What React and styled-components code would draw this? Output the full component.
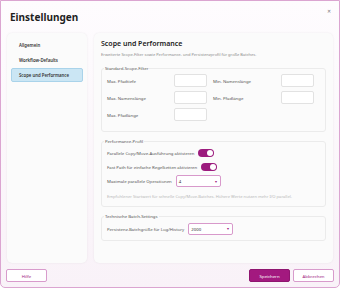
import React from 'react'
import styled, { createGlobalStyle } from 'styled-components'

const GlobalStyle = createGlobalStyle`
  html, body {
    margin: 0;
    padding: 0;
    background: #ffffff;
  }
  body {
    font-family: 'Noto Sans', 'Liberation Sans', sans-serif;
    color: #333;
  }
  * {
    box-sizing: border-box;
  }
`

const scopeFields = [
  ['Max. Pfadtiefe', 'Min. Namenslänge'],
  ['Max. Namenslänge', 'Min. Pfadlänge'],
  ['Max. Pfadlänge', null],
]

const App = () => {
  return (
    <>
      <GlobalStyle />
      <Window>
        <Header>
          <Title>Einstellungen</Title>
          <Close>✕</Close>
        </Header>
        <Main>
          <Sidebar>
            <NavItem>Allgemein</NavItem>
            <NavItem>Workflow-Defaults</NavItem>
            <NavItem $active>Scope und Performance</NavItem>
          </Sidebar>
          <Content>
            <PanelTitle>Scope und Performance</PanelTitle>
            <Subtitle>
              Erweiterte Scope-Filter sowie Performance- und Persistenzprofil für große Batches.
            </Subtitle>

            <Group $top="7px" $padTop="3px">
              <Legend>Standard-Scope-Filter</Legend>
              <FieldGrid>
                {scopeFields.map(([left, right]) => (
                  <React.Fragment key={left}>
                    <FieldLabel>{left}</FieldLabel>
                    <NumberInput />
                    {right ? <FieldLabel>{right}</FieldLabel> : <span />}
                    {right ? <NumberInput /> : <span />}
                  </React.Fragment>
                ))}
              </FieldGrid>
            </Group>

            <Group $top="6px" $padTop="2px">
              <Legend>Performance-Profil</Legend>
              <Row>
                <FieldLabel>Parallele Copy/Move-Ausführung aktivieren</FieldLabel>
                <Toggle />
              </Row>
              <Row>
                <FieldLabel>Fast Path für einfache Regelketten aktivieren</FieldLabel>
                <Toggle />
              </Row>
              <Row $select>
                <FieldLabel>Maximale parallele Operationen</FieldLabel>
                <Select>
                  <span>4</span>
                  <Caret>▾</Caret>
                </Select>
              </Row>
              <Hint>
                Empfohlener Startwert für schnelle Copy/Move-Batches. Höhere Werte nutzen mehr I/O parallel.
              </Hint>
            </Group>

            <Group $top="6px" $padTop="1.5px" $padBottom="5px">
              <Legend>Technische Batch-Settings</Legend>
              <Row $select>
                <FieldLabel>Persistenz-Batchgröße für Log/History</FieldLabel>
                <Select>
                  <span>2000</span>
                  <Caret>▾</Caret>
                </Select>
              </Row>
            </Group>
          </Content>
        </Main>
        <Footer>
          <Button>Hilfe</Button>
          <Actions>
            <Button $primary>Speichern</Button>
            <Button>Abbrechen</Button>
          </Actions>
        </Footer>
      </Window>
    </>
  )
}

export default App

const Window = styled.div`
  width: 340px;
  height: 288px;
  border: 1px solid #dba5d1;
  border-radius: 0 0 5px 5px;
  background: linear-gradient(180deg, #fefcfe 0%, #f9f2f8 100%);
  display: flex;
  flex-direction: column;
`

const Header = styled.div`
  height: 32px;
  display: flex;
  justify-content: space-between;
  align-items: flex-start;
  padding: 10px 8px 0 9px;
`

const Title = styled.h1`
  margin: 0;
  font-size: 10px;
  line-height: 12px;
  font-weight: 700;
  color: #1f1f1f;
`

const Close = styled.span`
  font-size: 4.5px;
  line-height: 6px;
  color: #777;
  margin-top: -3px;
`

const Main = styled.div`
  height: 230px;
  display: flex;
  gap: 7px;
  padding: 0 6px;
`

const Panel = styled.div`
  background: #fbfbfb;
  border-radius: 5px;
  box-shadow: 0 0 2px rgba(0, 0, 0, 0.08);
`

const Sidebar = styled(Panel)`
  width: 80px;
  padding: 5px 4px;
  display: flex;
  flex-direction: column;
  gap: 1px;
`

const NavItem = styled.div`
  height: 14px;
  display: flex;
  align-items: center;
  padding-left: 7px;
  font-size: 4.3px;
  font-weight: 600;
  color: #333;
  border-radius: 2px;
  border: 1px solid ${p => (p.$active ? '#a9d3ea' : 'transparent')};
  background: ${p => (p.$active ? '#cbe6f4' : 'transparent')};
`

const Content = styled(Panel)`
  flex: 1;
  padding: 6px 7px;
  display: flex;
  flex-direction: column;
`

const PanelTitle = styled.h2`
  margin: 0;
  font-size: 7px;
  line-height: 10px;
  font-weight: 600;
  color: #222;
`

const Subtitle = styled.p`
  margin: 3px 0 0;
  font-size: 4px;
  line-height: 6px;
  color: #8a8a8a;
`

const Group = styled.fieldset`
  margin: ${p => p.$top} 0 0;
  padding: ${p => p.$padTop} 5px ${p => p.$padBottom || '6px'};
  border: 1px solid #ebebeb;
  border-radius: 3px;
  min-width: 0;
`

const Legend = styled.legend`
  padding: 0 1px;
  margin-left: -3px;
  font-size: 4.3px;
  line-height: 6px;
  color: #555;
`

const FieldGrid = styled.div`
  display: grid;
  grid-template-columns: 67px 39px 68px 33px;
  grid-auto-rows: 13px;
  row-gap: 4px;
  align-items: center;
  padding-bottom: 4px;
`

const FieldLabel = styled.span`
  font-size: 4.3px;
  color: #555;
  white-space: nowrap;
`

const NumberInput = styled.div`
  width: 33px;
  height: 13px;
  background: #fff;
  border: 1px solid #e2e2e2;
  border-radius: 2px;
`

const Row = styled.div`
  display: flex;
  align-items: center;
  gap: 4px;
  height: ${p => (p.$select ? '12px' : '13px')};
  margin-top: ${p => (p.$select ? '2px' : '0.5px')};
`

const Toggle = styled.div`
  width: 16px;
  height: 8px;
  border-radius: 4px;
  background: #9c1b7e;
  display: flex;
  justify-content: flex-end;
  align-items: center;
  padding: 1px;

  &::after {
    content: '';
    width: 6px;
    height: 6px;
    border-radius: 50%;
    background: #fff;
  }
`

const Select = styled.div`
  width: 45px;
  height: 12px;
  background: #fff;
  border: 1px solid #d899cb;
  border-radius: 2px;
  display: flex;
  align-items: center;
  justify-content: space-between;
  padding: 0 3px 0 2px;
  font-size: 4.3px;
  color: #333;
`

const Caret = styled.span`
  font-size: 4px;
  color: #a0207f;
`

const Hint = styled.p`
  margin: 7px 0 0;
  font-size: 4.1px;
  line-height: 6px;
  color: #b8b8b8;
  white-space: nowrap;
`

const Footer = styled.div`
  flex: 1;
  display: flex;
  align-items: flex-start;
  justify-content: space-between;
  padding: 6px 5px 0;
`

const Actions = styled.div`
  display: flex;
  gap: 3px;
`

const Button = styled.button`
  width: 41px;
  height: 13px;
  padding: 0;
  font-family: inherit;
  font-size: 4.3px;
  border-radius: 2px;
  border: 1px solid ${p => (p.$primary ? '#8f1570' : '#d89bcc')};
  background: ${p => (p.$primary ? '#a3197f' : '#ffffff')};
  color: ${p => (p.$primary ? '#ffffff' : '#a0207f')};
`
